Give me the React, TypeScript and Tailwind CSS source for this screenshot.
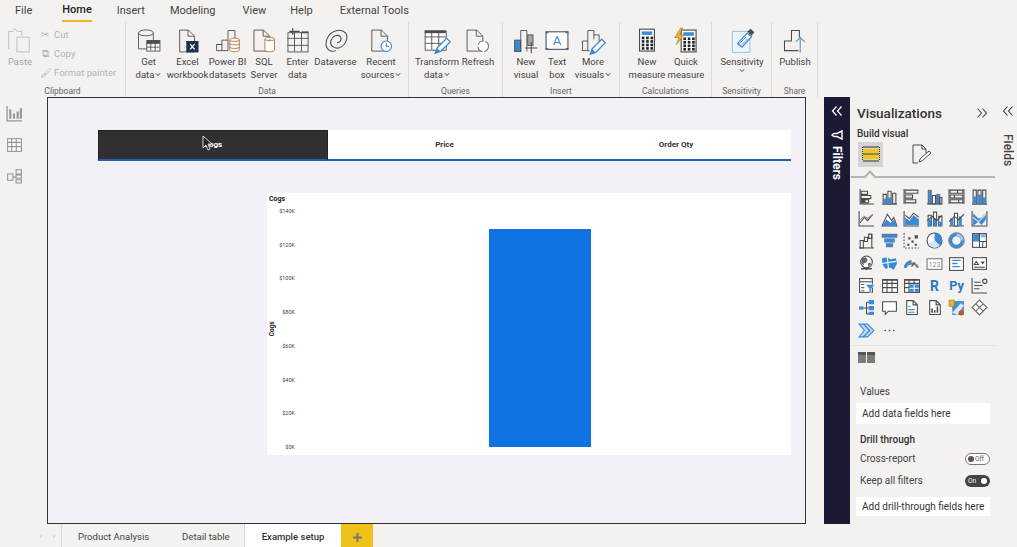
import React from "react";

const D = "#4b4b4b";
const B = "#3b8ad9";
const F = { fill: "none", stroke: D, strokeWidth: 1 };
const FONT = "Roboto,sans-serif";

function I32({ children, w = 28 }: { children: React.ReactNode; w?: number }) {
  return (
    <svg width={w} height={w} viewBox="0 0 32 32" className="block">
      {children}
    </svg>
  );
}
function I16({ children }: { children: React.ReactNode }) {
  return (
    <svg width="17" height="17" viewBox="0 0 16 16" className="block">
      {children}
    </svg>
  );
}

const Doc = ({ x = 6, y = 3, w = 16, h = 24, c = D }: { x?: number; y?: number; w?: number; h?: number; c?: string }) => (
  <path d={`M${x + .5} ${y + .5}h${w - 7}l7 7v${h - 7}h-${w}z M${x + w - 7} ${y + .5}v7h7`} fill="none" stroke={c} />
);
const Table = ({ x, y, w, h, head = false, c = D }: { x: number; y: number; w: number; h: number; head?: boolean; c?: string }) => (
  <g>
    <rect x={x + .5} y={y + .5} width={w} height={h} fill="#fff" stroke={c} />
    {head && <rect x={x + .5} y={y + .5} width={w} height={h / 4} fill={c} />}
    <path d={`M${x + w / 3} ${y}v${h} M${x + (2 * w) / 3} ${y}v${h} M${x} ${y + h / 3}h${w} M${x} ${y + (2 * h) / 3}h${w}`} stroke={c} fill="none" />
  </g>
);
const Pencil = ({ x = 0, y = 0 }: { x?: number; y?: number }) => (
  <g transform={`translate(${x} ${y})`}>
    <path d="M16 30l2-6L29 13l4 4L22 28z" fill="#fff" stroke={B} strokeWidth="1.5" />
    <path d="M16 30l2-6 4 4z" fill={B} />
  </g>
);
const Calc = ({ x = 8, y = 3 }: { x?: number; y?: number }) => (
  <g>
    <rect x={x + .5} y={y + .5} width="17" height="25" fill="#fff" stroke={D} strokeWidth="1.3" />
    <rect x={x + 3} y={y + 3} width="12" height="4" fill={B} />
    {[10, 14, 18, 22].map((yy) => [3, 8, 13].map((xx) => <rect key={`${xx}-${yy}`} x={x + xx} y={y + yy - 1} width="3" height="3" fill="#222" />))}
  </g>
);

const ribbon = {
  get: (
    <I32>
      <path d="M4 7c0-5 17-5 17 0v18H4z M4 7c0 4 17 4 17 0" {...F} />
      <Table x={13} y={15} w={15} h={12} head />
    </I32>
  ),
  excel: (
    <I32>
      <Doc x={6} y={3} w={17} h={25} />
      <rect x={14} y={16} width="14" height="13" fill="#21314d" />
      <path d="M18.5 19.5l5 6 M23.5 19.5l-5 6" stroke="#fff" strokeWidth="1.4" />
    </I32>
  ),
  pbi: (
    <I32>
      <path d="M16 15V4h8v11 M9 15h7v12H3V20h6z M3 20h6v7" {...F} />
      <path d="M18 15c0-3 11-3 11 0v11c0 3-11 3-11 0z M18 15c0 2 11 2 11 0 M18 19c0 2 11 2 11 0 M18 23c0 2 11 2 11 0" fill="#fff" stroke="#b5703a" />
    </I32>
  ),
  sql: (
    <I32>
      <Doc x={4} y={3} w={18} h={24} />
      <path d="M17 14c0-3 11-3 11 0v12c0 3-11 3-11 0z M17 14c0 2 11 2 11 0" fill="#fff" stroke="#b5703a" />
    </I32>
  ),
  enter: (
    <I32>
      <rect x="4.5" y="6.5" width="23" height="22" fill="none" stroke={D} />
      <path d="M4 13h24 M12 6v22 M20 6v22 M4 21h24" stroke={D} />
      <path d="M6 5h12 M10 1v8" stroke={D} strokeWidth="1.3" />
      <rect x="20" y="5" width="8" height="2" fill={D} />
    </I32>
  ),
  dataverse: (
    <I32>
      <path d="M16 27C7 30 2 22 6 13 10 4 22 1 27 7c4 6-1 15-8 17-6 1-10-3-9-8 2-6 8-8 11-5 2 3 0 7-4 7" fill="none" stroke={D} strokeWidth="1.2" />
    </I32>
  ),
  recent: (
    <I32>
      <Doc x={5} y={3} w={18} h={24} />
      <circle cx="22" cy="22" r="6" fill="#fff" stroke={B} strokeWidth="1.3" />
      <path d="M22 18.5V22h3" fill="none" stroke={D} />
    </I32>
  ),
  transform: (
    <I32>
      <Table x={2} y={4} w={24} h={22} />
      <rect x="2" y="4" width="24" height="3" fill={D} />
      <Pencil x={-2} y={0} />
    </I32>
  ),
  refresh: (
    <I32>
      <Doc x={3} y={3} w={18} h={24} />
      <circle cx="22" cy="22" r="6" fill="#fff" stroke="#777" strokeWidth="1.2" strokeDasharray="8 2" />
    </I32>
  ),
  newvis: (
    <I32>
      <rect x="3" y="15" width="7" height="13" fill={B} stroke={D} />
      <path d="M10 28V4h7v24" {...F} />
      <rect x="18" y="9" width="6" height="12" fill="#a8a8a8" stroke={D} />
      <path d="M15 24h14 M22 17v13" stroke={D} strokeWidth="1.2" />
    </I32>
  ),
  textbox: (
    <I32>
      <rect x="3.5" y="5.5" width="25" height="20" fill="#fff" stroke={D} strokeWidth="1.2" />
      <path d="M3 5h3v2H3z M26 5h3v2h-3z M3 24h3v2H3z M26 24h3v2h-3z" fill="#2f6fb5" />
      <text x="16" y="21" textAnchor="middle" fontSize="15" fill={B} fontFamily={FONT}>A</text>
    </I32>
  ),
  morevis: (
    <I32>
      <path d="M4 27V16h6 M10 27V4h7v10 M17 9h6v8" {...F} />
      <path d="M3 27h9" stroke={D} />
      <Pencil x={-3} y={1} />
    </I32>
  ),
  newm: <I32><Calc x={7} y={2} /></I32>,
  quick: (
    <I32>
      <Calc x={10} y={3} />
      <path d="M10 1L3 12h5l-3 8 9-11H9l3-8z" fill="#eab530" stroke="#9a6a10" strokeWidth=".6" />
    </I32>
  ),
  sens: (
    <I32>
      <path d="M5 5h20v24H5z" fill="#eaf4fc" stroke="#8db8de" />
      <path d="M11 19L22 7l5 4L16 23z" fill="#fff" stroke={B} strokeWidth="1.5" />
      <path d="M22 5l4-3 4 4-3 4z" fill={D} />
      <path d="M13 19l8-8 M15 21l8-8" stroke={B} />
    </I32>
  ),
  publish: (
    <I32>
      <path d="M12 16V4h9v8 M12 16H4v11h16" {...F} strokeWidth={1.2} />
      <path d="M22 29V13 M17 17l5-5 5 5" fill="none" stroke="#6f9fcb" strokeWidth="1.5" />
    </I32>
  ),
};

function RB({ w, icon, l1, l2, caret }: { w: string; icon: React.ReactNode; l1: string; l2?: string; caret?: boolean }) {
  return (
    <div className={`${w} flex flex-col items-center shrink-0`}>
      <div className="h-[30px] flex items-end justify-center">{icon}</div>
      <div className="text-[9.500px] leading-[13px] text-[#444] whitespace-nowrap text-center">
        <div>{l1}</div>
        {(l2 || caret) && (
          <div className="flex items-center justify-center gap-[1px]">
            {l2}
            {caret && (
              <svg width="6" height="5" viewBox="0 0 6 5">
                <path d="M.8 1.2L3 3.6l2.2-2.4" fill="none" stroke="#444" />
              </svg>
            )}
          </div>
        )}
      </div>
    </div>
  );
}

function Group({ w, pl, label, children }: { w: string; pl: string; label: string; children: React.ReactNode }) {
  return (
    <div className={`${w} shrink-0 h-[75px] flex flex-col border-r border-[#dcdad8]`}>
      <div className={`flex ${pl} pt-[3px] h-[64px]`}>{children}</div>
      <div className="text-[8.5px] leading-[11px] text-[#666] text-center">{label}</div>
    </div>
  );
}

const vis: React.ReactNode[] = [
  <g><path d="M2 1v14h13" {...F} /><path d="M3 3h6v3H3z M3 7h9v3H3z M3 11h7v3H3z" fill="none" stroke={D} /><rect x="3" y="11" width="4" height="3" fill={D} /></g>,
  <g><path d="M1 15h14" {...F} /><path d="M2 6h3v9H2z M6.500 3h3v12h-3z M11 5h3v10h-3z" fill="none" stroke={D} /><path d="M2 10h3v5H2z M6.500 9h3v6h-3z" fill={B} /></g>,
  <g><path d="M1 1v14" {...F} /><path d="M2 2h12v3H2z M2 6.500h7v3H2z M2 11h10v3H2z" fill="none" stroke={D} /></g>,
  <g><path d="M1 15h14" {...F} /><path d="M2 2h3v13H2z M10 6h3v9h-3z" fill={B} stroke={D} strokeWidth=".6" /><path d="M6 7h3v8H6z M13 9h2v6h-2z" fill="none" stroke={D} /></g>,
  <g><path d="M1 1v14M15 1v14" stroke={D} /><path d="M2 2h12v3H2z M2 6.500h12v3H2z M2 11h12v3H2z M9 2v3 M6 6.500v3 M10 11v3" fill="none" stroke={D} /></g>,
  <g><path d="M1 15h14" {...F} /><path d="M2 2h3v13H2z M6.500 2h3v13h-3z M11 2h3v13h-3z" fill="none" stroke={D} /><path d="M2 8h3v7H2z M6.500 6h3v9h-3z M11 9h3v6h-3z" fill={B} /></g>,
  <g><path d="M1 1v14h14" {...F} /><path d="M2 12l4-5 3 3 5-6" fill="none" stroke={D} /><path d="M2 9l4-3 3 2 5-4" fill="none" stroke="#888" /></g>,
  <g><path d="M1 15L6 4l4 6 2-3 3 8z" fill="#fff" stroke={D} /><path d="M1 15l4-6 4 3 3-3 3 6z" fill={B} /></g>,
  <g><path d="M1 1v14h14" {...F} /><path d="M2 14V7l4 3 4-5 5 4v5z" fill={B} /><path d="M2 5l4 3 4-5 5 4" fill="none" stroke={D} /></g>,
  <g><path d="M2 5h3v10H2z M7 2h3v13H7z M12 6h3v9h-3z" fill="#fff" stroke={D} /><path d="M2 9h3v6H2z M7 8h3v7H7z M12 11h3v4h-3z" fill={B} /><path d="M1 10l5-4 4 4 5-5" fill="none" stroke={D} /></g>,
  <g><path d="M1 15h14" {...F} /><path d="M2 8h3v7H2z M10 6h3v9h-3z" fill={B} /><path d="M6 3h3v12H6z" fill="#fff" stroke={D} /><path d="M1 11l5-5 4 3 5-5" fill="none" stroke={D} /></g>,
  <g><path d="M1 1v14h14V1" {...F} /><path d="M2 3l5 5 3-1 4-4v6l-4 5-3-3-5 4z" fill={B} /><path d="M2 7l5 4 7-7" fill="none" stroke="#ddd" /></g>,
  <g><path d="M1 15h14" {...F} /><path d="M2 8h3v7H2z M6 5h3v4H6z M10 2h3v4h-3z" fill="none" stroke={D} /><path d="M13 2v13" stroke={D} /></g>,
  <g><path d="M1 2h14v3H1z" fill={B} stroke={D} strokeWidth=".5" /><path d="M3 6h10v4H3z" fill={B} /><path d="M5 11h6v3H5z" fill={B} stroke={D} strokeWidth=".5" /></g>,
  <g><path d="M1 1v14h14" {...F} strokeDasharray="1.500 1.500" /><path d="M4 11h2v2H4z M8 8h2v2H8z M11 3h3v3h-3z M5 5h2v2H5z M11 11h2v2h-2z" fill={D} /></g>,
  <g><circle cx="8" cy="8" r="7" fill="#fff" stroke={D} /><path d="M8 8V1a7 7 0 0 1 5 12z" fill={B} /><path d="M8 8L13 13A7 7 0 0 1 2 11z" fill="#cfe3f5" /></g>,
  <g><circle cx="8" cy="8" r="5.500" fill="none" stroke={B} strokeWidth="3" /><path d="M8 2.500a5.500 5.500 0 0 1 5.500 5.500" fill="none" stroke="#9fc6ea" strokeWidth="3" /><circle cx="8" cy="8" r="7.300" fill="none" stroke={D} strokeWidth=".7" /></g>,
  <g><rect x="1.500" y="1.500" width="13" height="13" fill="#fff" stroke={D} /><path d="M2 2h6v7H2z" fill={B} /><path d="M9 2h5v3H9z" fill="#7fb2e3" /><path d="M8 1v14 M8 9h7 M11 9v6" stroke={D} /></g>,
  <g><circle cx="8" cy="6.500" r="5.500" fill="#fff" stroke={D} /><path d="M4 3l3-1 2 2-1 3-3 1 1 2-3-2z M9 8l3-1v2l-2 2z" fill="#666" /><path d="M3 13h10 M8 12v2" stroke={D} strokeWidth="1.300" /></g>,
  <g><path d="M1 3l5-1 3 2 5-1 1 5-3 6-3-2-5 1-3-5z" fill={B} /><path d="M6 2l1 11 M1 8l13-2" stroke="#fff" /></g>,
  <g><path d="M2 12a6.500 6.500 0 0 1 12 0" fill="none" stroke="#888" strokeWidth="2.500" /><path d="M2 12a6.500 6.500 0 0 1 6-6" fill="none" stroke={B} strokeWidth="2.500" /><path d="M8 11l3-4" stroke={D} /></g>,
  <g><rect x="1" y="3.500" width="14" height="10" fill="#fff" stroke="#777" /><text x="8" y="11" textAnchor="middle" fontSize="6.500" fill="#888" fontFamily={FONT}>123</text></g>,
  <g><rect x="1.500" y="2.500" width="13" height="12" fill="#fff" stroke={D} /><path d="M4 5h8 M4 8h5 M4 11h7" stroke={B} strokeWidth="1.200" /></g>,
  <g><rect x="1.500" y="2.500" width="13" height="11" fill="#fff" stroke={D} /><path d="M3 9l2-3 2 3z" fill="none" stroke={D} /><path d="M9 6h4l-2 3z" fill={D} /><path d="M3 11.500h10" stroke={D} /></g>,
  <g><rect x="1.500" y="1.500" width="12" height="13" fill="#fff" stroke={D} /><path d="M1 4.500h12" stroke={D} /><path d="M3 7h3 M3 10h3 M3 13h3" stroke="#666" /><path d="M7 7h9l-3.500 4v4l-2-1v-3z" fill={B} stroke="#fff" strokeWidth=".5" /></g>,
  <g><Table x={1} y={2} w={14} h={12} /><rect x="1" y="2" width="14" height="1.500" fill={D} /></g>,
  <g><Table x={1} y={2} w={14} h={12} /><path d="M6 7h9v7H6z" fill={B} /><path d="M10.500 7v7 M6 10.500h9" stroke="#fff" /><rect x="1" y="2" width="14" height="1.500" fill={D} /></g>,
  <text x="8" y="13" textAnchor="middle" fontSize="13" fontWeight="700" fill="#2b78c5" fontFamily={FONT}>R</text>,
  <text x="8" y="12.500" textAnchor="middle" fontSize="12" fontWeight="700" fill="#2b78c5" fontFamily={FONT}>Py</text>,
  <g><path d="M1 1v14h14" {...F} /><path d="M3 5h6 M3 8h8 M3 11h5" stroke={D} /><circle cx="13" cy="4" r="2" fill="none" stroke={D} /></g>,
  <g><rect x="1" y="7" width="4" height="3" fill={B} /><path d="M5 8.500h3 M8 3v11 M8 3h2 M8 8.500h2 M8 14h2" stroke={D} /><path d="M10 1h5v4h-5z M10 6.500h5v4h-5z M10 12h5v3h-5z" fill={B} /></g>,
  <path d="M1.500 2.500h13v9H7l-3 3v-3H1.500z" fill="#fff" stroke={D} />,
  <g><path d="M3.500 1.500h6l4 4v9h-10z M9.500 1.500v4h4" fill="#fff" stroke={D} /><path d="M5 7h2 M5 10h6 M5 12.500h6" stroke={B} /></g>,
  <g><path d="M3.500 1.500h6l4 4v9h-10z M9.500 1.500v4h4" fill="#fff" stroke={D} /><path d="M5 9h1.500v4H5z M7.500 10.500H9V13H7.500z M10 7h1.500v6H10z" fill={D} /></g>,
  <g><path d="M4 2h11v13H4z" fill="#3f8fd6" /><path d="M4 13l8-9 3 2-6 9z" fill="#dbeafa" /><path d="M1 1h5v6H1z" fill="#eab530" stroke="#9a6a10" strokeWidth=".5" /><circle cx="12.500" cy="13" r="2.500" fill="#c5571c" /></g>,
  <g><path d="M8 1l7 7-7 7-7-7z M4.500 4.500l7 7 M11.500 4.500l-7 7" fill="#fff" stroke="#666" /></g>,
  <g><path d="M1 2h8l6 6-6 6H1l5-6z" fill="#bcdcf5" stroke={B} /><path d="M5 2l6 6-6 6" fill="none" stroke={B} strokeWidth="1.300" /></g>,
  <g><circle cx="4" cy="8" r=".8" fill={D} /><circle cx="8" cy="8" r=".8" fill={D} /><circle cx="12" cy="8" r=".8" fill={D} /></g>,
];

function Field({ text, mt, h }: { text: string; mt: string; h: string }) {
  return <div className={`${mt} ${h} ml-[6px] mr-[8px] bg-white flex items-center pl-[6px] text-[10px] text-[#333] whitespace-nowrap`}>{text}</div>;
}

const AxisLabels = ["$140K", "$120K", "$100K", "$80K", "$60K", "$40K", "$20K", "$0K"];

function Slicer({ text, w }: { text: string; w: string }) {
  return (
    <div className={`${w} h-full bg-white border-b-2 border-[#1f63b5] flex items-center justify-center text-[8px] font-bold text-[#333]`}>{text}</div>
  );
}

export default function App() {
  return (
    <div className="w-[1017px] h-[547px] overflow-hidden bg-[#f3f2f1] flex flex-col font-['Roboto',sans-serif] text-[#333]">
      {/* menu */}
      <div className="h-[22px] flex items-center text-[11px] text-[#444] shrink-0">
        <span className="ml-[15px]">File</span>
        <span className="ml-[30px] h-[22px] flex items-center font-medium text-[#222] border-b-2 border-[#eab530]">Home</span>
        <span className="ml-[25px]">Insert</span>
        <span className="ml-[25px]">Modeling</span>
        <span className="ml-[27px]">View</span>
        <span className="ml-[24px]">Help</span>
        <span className="ml-[27px]">External Tools</span>
      </div>
      {/* ribbon */}
      <div className="h-[75px] flex shrink-0">
        <Group w="w-[126px]" pl="" label="Clipboard">
          <div className="w-[40px] flex flex-col items-center shrink-0 opacity-40">
            <div className="h-[30px] flex items-end">
              <I32>
                <path d="M3 25V5h5l2-3 3 3h5v5" fill="none" stroke="#666" />
                <rect x="12.500" y="11.500" width="14" height="17" fill="none" stroke="#666" />
              </I32>
            </div>
            <div className="text-[9.500px] leading-[13px]">Paste</div>
          </div>
          <div className="flex flex-col text-[9.5px] leading-[19px] text-[#b3b3b3] whitespace-nowrap">
            <div className="flex items-center gap-[4px]"><span className="w-[10px] text-center">✂</span>Cut</div>
            <div className="flex items-center gap-[4px]"><span className="w-[10px] text-center">⧉</span>Copy</div>
            <div className="flex items-center gap-[4px]"><span className="w-[10px] text-center">🖌</span>Format painter</div>
          </div>
        </Group>
        <Group w="w-[283px]" pl="pl-[4px]" label="Data">
          <RB w="w-[37px]" icon={ribbon.get} l1="Get" l2="data" caret />
          <RB w="w-[41px]" icon={ribbon.excel} l1="Excel" l2="workbook" />
          <RB w="w-[39px]" icon={ribbon.pbi} l1="Power BI" l2="datasets" />
          <RB w="w-[34px]" icon={ribbon.sql} l1="SQL" l2="Server" />
          <RB w="w-[33px]" icon={ribbon.enter} l1="Enter" l2="data" />
          <RB w="w-[43px]" icon={ribbon.dataverse} l1="Dataverse" />
          <RB w="w-[48px]" icon={ribbon.recent} l1="Recent" l2="sources" caret />
        </Group>
        <Group w="w-[94px]" pl="pl-[7px]" label="Queries">
          <RB w="w-[42px]" icon={ribbon.transform} l1="Transform" l2="data" caret />
          <RB w="w-[40px]" icon={ribbon.refresh} l1="Refresh" />
        </Group>
        <Group w="w-[117px]" pl="pl-[7px]" label="Insert">
          <RB w="w-[32px]" icon={ribbon.newvis} l1="New" l2="visual" />
          <RB w="w-[30px]" icon={ribbon.textbox} l1="Text" l2="box" />
          <RB w="w-[42px]" icon={ribbon.morevis} l1="More" l2="visuals" caret />
        </Group>
        <Group w="w-[92px]" pl="pl-[7px]" label="Calculations">
          <RB w="w-[40px]" icon={ribbon.newm} l1="New" l2="measure" />
          <RB w="w-[38px]" icon={ribbon.quick} l1="Quick" l2="measure" />
        </Group>
        <Group w="w-[60px]" pl="pl-[6px]" label="Sensitivity">
          <RB w="w-[48px]" icon={ribbon.sens} l1="Sensitivity" caret />
        </Group>
        <Group w="w-[46px]" pl="pl-[4px]" label="Share">
          <RB w="w-[38px]" icon={ribbon.publish} l1="Publish" />
        </Group>
      </div>
      {/* main */}
      <div className="h-[427px] flex shrink-0">
        {/* rail */}
        <div className="w-[47px] shrink-0 flex flex-col pl-[6px] pt-[8px] gap-[14px] opacity-75">
          <I16>
            <path d="M1 1v14h14" fill="none" stroke="#777" strokeWidth="1.200" />
            <path d="M3 13V4h2v9z M6.500 13V8h2v5z M10 13V6h2v7z M13 13V3h2v10z" fill="#777" />
          </I16>
          <I16>
            <Table x={1} y={2} w={13} h={12} c="#777" />
          </I16>
          <I16>
            <path d="M1.500 6.500h5v6h-5z M9.500 2.500h5v4h-5z M9.500 7.500h5v3h-5z M9.500 12h5v3h-5z M6.500 9.500h3" fill="none" stroke="#777" />
          </I16>
        </div>
        {/* canvas */}
        <div className="w-[759px] h-full shrink-0 bg-[#f3f1f7] border border-[#333] pt-[32px] pl-[50px] relative">
          <div className="w-[695px] h-[31px] flex">
            <div className="w-[230px] h-full bg-[#312f32] border-t border-x border-[#222] border-b-2 border-b-[#1f63b5] flex items-center justify-center text-[8px] font-bold text-white">Cogs</div>
            <Slicer text="Price" w="w-[233px]" />
            <Slicer text="Order Qty" w="w-[230px]" />
          </div>
          <svg width="12" height="16" viewBox="0 0 12 16" className="absolute left-[154px] top-[37px]">
            <path d="M1 1v12l3-3 2 5 2-1-2-5h4z" fill="#222" stroke="#fff" strokeWidth=".8" />
          </svg>
          <div className="ml-[169px] mt-[32px] w-[524px] h-[262px] bg-white flex flex-col">
            <div className="h-[14px] pl-[2px] text-[7px] leading-[12px] font-bold text-[#222]">Cogs</div>
            <div className="flex h-[244px]">
              <div className="w-[10px] flex items-center justify-center pl-[1px]">
                <span className="-rotate-90 text-[6.500px] font-bold text-[#222] whitespace-nowrap">Cogs</span>
              </div>
              <div className="w-[18px] flex flex-col justify-between items-end text-[5.500px] leading-[8px] text-[#444]">
                {AxisLabels.map((a) => (
                  <span key={a}>{a}</span>
                ))}
              </div>
              <div className="ml-[194px] mt-[22px] mb-[4px] w-[102px] bg-[#0f74e2]" />
            </div>
          </div>
        </div>
        <div className="w-[18px] shrink-0" />
        {/* filters */}
        <div className="w-[26px] shrink-0 bg-[#1a1a35] flex flex-col items-center text-white pt-[8px]">
          <svg width="12" height="12" viewBox="0 0 12 12">
            <path d="M5.500 1.500L1.500 6l4 4.500 M10.500 1.500L6.500 6l4 4.500" fill="none" stroke="#fff" strokeWidth="1.300" />
          </svg>
          <svg width="12" height="12" viewBox="0 0 12 12" className="mt-[12px]">
            <path d="M11 2v8L6 7.500H3L1 6l2-1.500h3z" fill="none" stroke="#fff" strokeWidth="1.400" />
          </svg>
          <div className="mt-[5px] [writing-mode:vertical-rl] text-[12px] font-bold leading-none">Filters</div>
        </div>
        {/* viz */}
        <div className="w-[148px] shrink-0 flex flex-col">
          <div className="h-[26px] pt-[6px] pl-[7px] pr-[10px] flex items-center justify-between">
            <span className="text-[13.500px] font-medium text-[#333]">Visualizations</span>
            <svg width="12" height="12" viewBox="0 0 12 12">
              <path d="M1.500 1.500l4 4.500-4 4.500 M6.500 1.500l4 4.500-4 4.500" fill="none" stroke="#444" strokeWidth="1.100" />
            </svg>
          </div>
          <div className="mt-[4px] pl-[7px] text-[10px] leading-[13px] font-medium text-[#333]">Build visual</div>
          <div className="mt-[1px] pl-[8px] flex items-center h-[26px]">
            <div className="w-[25px] h-[25px] bg-[#d6d4d2] flex items-center justify-center">
              <svg width="20" height="20" viewBox="0 0 20 20">
                <path d="M2 3h16 M2 17h16 M2 10h16" stroke="#333" />
                <rect x="2" y="5" width="16" height="4" fill="#f2c811" />
                <rect x="2" y="11" width="16" height="4" fill="#f2c811" />
                <path d="M1.500 3v14 M18.500 3v14" stroke="#333" strokeDasharray="1 1" />
              </svg>
            </div>
            <div className="ml-[27px]">
              <svg width="22" height="22" viewBox="0 0 22 22">
                <path d="M8 20H3V2h9l4 4v4 M12 2v4h4" fill="none" stroke={D} />
                <path d="M9 19l1-3 9-8 2 2-9 8z" fill="#fff" stroke={D} />
              </svg>
            </div>
          </div>
          <div className="relative mt-[9px] mx-[1px] w-[144px] h-[2px] bg-[#b5b3b1]">
            <div className="absolute left-[15px] -top-[4px] w-[8px] h-[8px] rotate-45 bg-[#f3f2f1] border-l-2 border-t-2 border-[#b5b3b1]" />
          </div>
          <div className="mt-[7px] pl-[8px] grid grid-cols-[repeat(6,22.500px)] auto-rows-[22.350px] items-center justify-items-start">
            {vis.map((v, i) => (
              <I16 key={i}>{v}</I16>
            ))}
          </div>
          <div className="mt-[4px] mx-[2px] h-px bg-[#e6e4e2]" />
          <div className="mt-[6px] pl-[8px] flex gap-[1px]">
            <div className="w-[8px] h-[11px] bg-[#7d7b7a] border-t-[3px] border-[#555]" />
            <div className="w-[8px] h-[11px] bg-[#7d7b7a] border-t-[3px] border-[#555]" />
          </div>
          <div className="mt-[22px] pl-[10px] text-[10px] leading-[13px] text-[#444]">Values</div>
          <Field text="Add data fields here" mt="mt-[5px]" h="h-[21px]" />
          <div className="mt-[9px] pl-[10px] text-[10px] leading-[13px] font-medium text-[#333]">Drill through</div>
          <div className="mt-[6px] pl-[10px] pr-[8px] flex items-center justify-between text-[10px] leading-[14px] text-[#444]">
            Cross-report
            <div className="w-[25px] h-[12px] rounded-full border border-[#777] bg-white flex items-center pl-[2px] gap-[1px] text-[6.500px] text-[#555]">
              <span className="w-[6px] h-[6px] rounded-full bg-[#555]" />
              Off
            </div>
          </div>
          <div className="mt-[8px] pl-[10px] pr-[8px] flex items-center justify-between text-[10px] leading-[14px] text-[#444]">
            Keep all filters
            <div className="w-[25px] h-[12px] rounded-full bg-[#444] flex items-center justify-between px-[3px] text-[6.500px] text-white">
              On
              <span className="w-[6px] h-[6px] rounded-full bg-white" />
            </div>
          </div>
          <Field text="Add drill-through fields here" mt="mt-[9px]" h="h-[19px]" />
        </div>
        {/* fields */}
        <div className="w-[19px] shrink-0 flex flex-col items-center pt-[8px]">
          <svg width="12" height="12" viewBox="0 0 12 12">
            <path d="M5.500 1.500L1.500 6l4 4.500 M10.500 1.500L6.500 6l4 4.500" fill="none" stroke="#444" strokeWidth="1.100" />
          </svg>
          <div className="mt-[17px] [writing-mode:vertical-rl] text-[12px] leading-none font-medium text-[#444]">Fields</div>
        </div>
      </div>
      {/* tabs */}
      <div className="h-[23px] flex items-stretch text-[9.500px] shrink-0">
        <div className="w-[62px] border-r border-[#dcdad8] flex items-center justify-end pr-[6px] gap-[11px] text-[#aaa] text-[7px] pt-[4px]">
          <span>‹</span>
          <span>›</span>
        </div>
        <div className="w-[183px] flex items-center pl-[16px] gap-[33px] text-[#444] border-r border-[#dcdad8] pt-[4px]">
          <span>Product Analysis</span>
          <span>Detail table</span>
        </div>
        <div className="w-[96px] bg-white flex items-center justify-center font-medium text-[#333] pt-[4px]">Example setup</div>
        <div className="w-[32px] bg-[#eec018] flex items-center justify-center pt-[4px]">
          <svg width="11" height="11" viewBox="0 0 11 11">
            <path d="M5.500 1v9 M1 5.500h9" stroke="#777" strokeWidth="2" />
          </svg>
        </div>
      </div>
    </div>
  );
}
